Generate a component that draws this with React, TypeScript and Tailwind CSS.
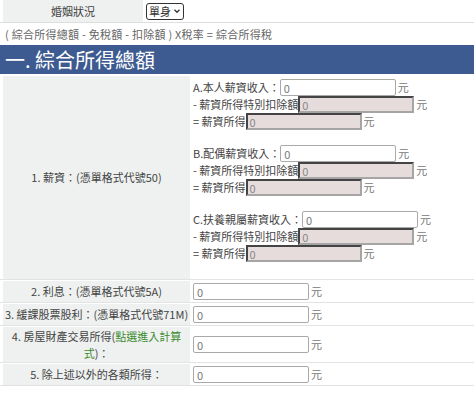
import React from "react"

const font = { fontFamily: '"Noto Sans CJK TC", "Noto Sans", sans-serif' }

function TextInput() {
  return (
    <input
      defaultValue="0"
      className="w-[116px] h-[17px] shrink-0 border border-[#a9a9a9] rounded-[2px] bg-white px-[3px] text-[11px] text-[#777] outline-none"
    />
  )
}

function LockedInput() {
  return (
    <input
      defaultValue="0"
      readOnly
      className="w-[116px] h-[17px] shrink-0 border-2 border-t-[#444] border-l-[#444] border-r-[#a5a5a5] border-b-[#a5a5a5] bg-[#e7dcdc] px-[2px] text-[11px] text-[#888] outline-none"
    />
  )
}

function Yuan() {
  return <span className="ml-[2px] text-[#777]">元</span>
}

function SalaryGroup({ title }: { title: string }) {
  return (
    <div className="flex flex-col">
      <div className="flex items-center h-[17px]">
        <span className="text-[#444]">{title}</span>
        <TextInput />
        <Yuan />
      </div>
      <div className="flex items-center h-[17px]">
        <span className="text-[#444]">- 薪資所得特別扣除額</span>
        <LockedInput />
        <Yuan />
      </div>
      <div className="flex items-center h-[17px]">
        <span className="text-[#444]">= 薪資所得</span>
        <LockedInput />
        <Yuan />
      </div>
    </div>
  )
}

function Row({ label, height, children }: { label: React.ReactNode; height: string; children?: React.ReactNode }) {
  return (
    <div className={`flex border-b border-[#e3e3e3] ${height}`}>
      <div className="w-[187px] ml-[3px] bg-[#eef1f0] flex items-center justify-center text-center text-[#444] leading-[17px]">
        {label}
      </div>
      <div className="flex-1 flex items-center pl-[3px]">{children}</div>
    </div>
  )
}

export default function App() {
  return (
    <div className="w-[474px] h-[393px] overflow-hidden bg-white text-[11px]" style={font}>
      <div className="flex h-[23px] border-b border-[#dedede]">
        <div className="w-[140px] ml-[3px] bg-[#eef1f0] flex items-center justify-center text-[#444]">婚姻狀況</div>
        <div className="flex items-center pl-[3px]">
          <div className="flex shrink-0 items-center gap-[2px] h-[17px] whitespace-nowrap border border-[#333] rounded-[3px] px-[2px] text-[#333]">
            <span>單身</span>
            <svg width="8" height="8" viewBox="0 0 8 8" fill="none" stroke="#333" strokeWidth="1.3">
              <path d="M1.5 2.8 L4 5.3 L6.5 2.8" />
            </svg>
          </div>
        </div>
      </div>
      <div className="h-[22px] flex items-center pl-[5px] text-[#666] tracking-[0.25px]">
        ( 綜合所得總額 - 免稅額 - 扣除額 ) X稅率 = 綜合所得稅
      </div>
      <div className="h-[29px] bg-[#3e5b91] flex items-center pl-[5px] text-white text-[20px] leading-none">
        一. 綜合所得總額
      </div>
      <div className="flex flex-col gap-px mt-[2px]">
        <div className="flex border-b border-[#e3e3e3] h-[204px]">
          <div className="w-[187px] ml-[3px] bg-[#eef1f0] flex items-center justify-center text-[#444]">
            1. 薪資：(憑單格式代號50)
          </div>
          <div className="flex-1 flex flex-col gap-[15px] pl-[3px] pt-[3px]">
            <SalaryGroup title="A.本人薪資收入：" />
            <SalaryGroup title="B.配偶薪資收入：" />
            <SalaryGroup title="C.扶養親屬薪資收入：" />
          </div>
        </div>
        <Row label="2. 利息：(憑單格式代號5A)" height="h-[22px]">
          <TextInput />
          <Yuan />
        </Row>
        <Row label="3. 緩課股票股利：(憑單格式代號71M)" height="h-[22px]">
          <TextInput />
          <Yuan />
        </Row>
        <Row
          label={
            <div className="whitespace-nowrap">
              4. 房屋財產交易所得(<span className="text-[#3c8a2e]">點選進入計算</span>
              <br />
              <span className="text-[#3c8a2e]">式</span>)：
            </div>
          }
          height="h-[36px]"
        >
          <TextInput />
          <Yuan />
        </Row>
        <Row label="5. 除上述以外的各類所得：" height="h-[22px]">
          <TextInput />
          <Yuan />
        </Row>
      </div>
    </div>
  )
}
